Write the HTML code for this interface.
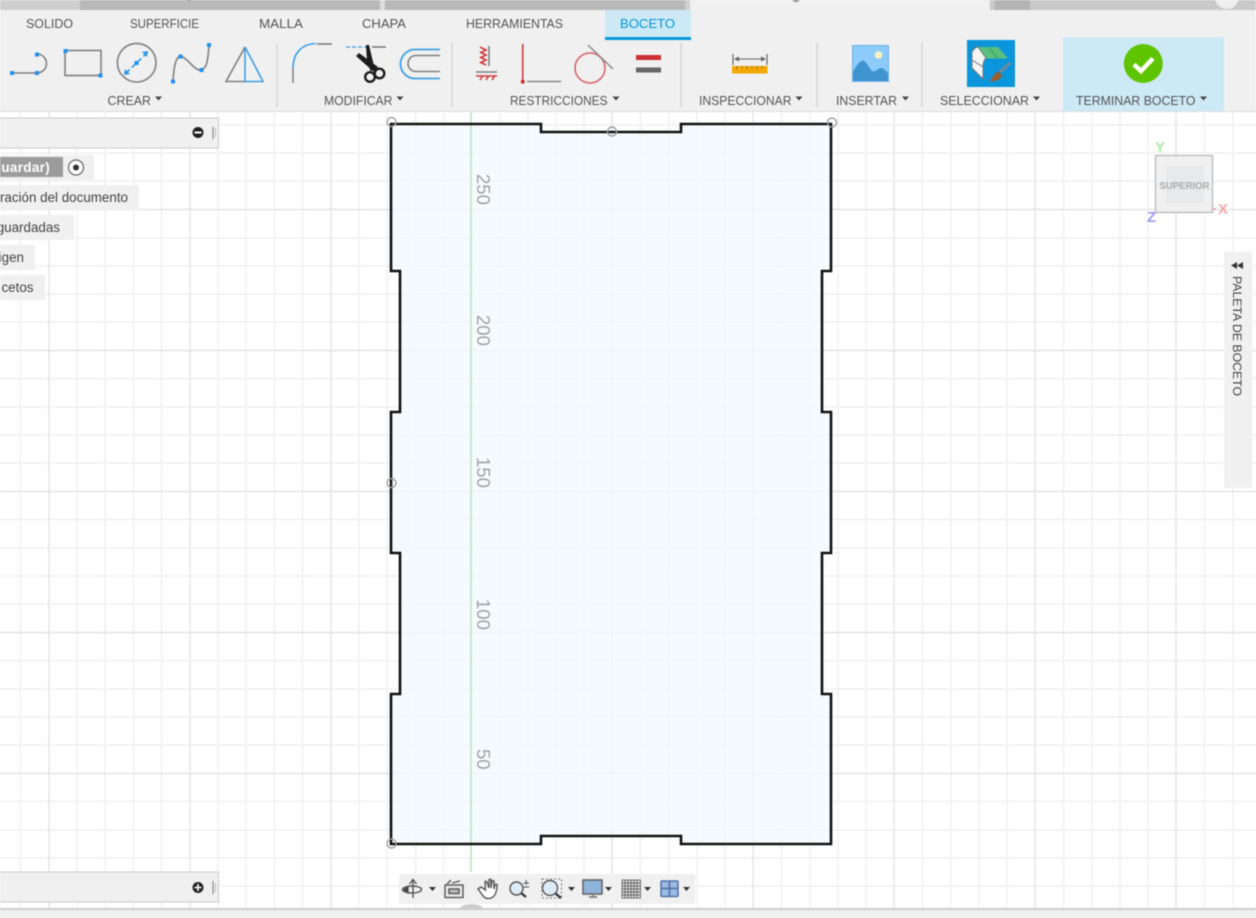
<!DOCTYPE html>
<html lang="es">
<head>
<meta charset="utf-8">
<title>Boceto</title>
<style>
html,body{margin:0;padding:0;background:#fff;}
body{width:1256px;height:918px;overflow:hidden;position:relative;font-family:"Liberation Sans",sans-serif;}
svg{position:absolute;left:0;top:0;filter:blur(.45px);}
text{font-family:"Liberation Sans",sans-serif;}
</style>
</head>
<body>
<svg width="1256" height="918" viewBox="0 0 1256 918" xmlns="http://www.w3.org/2000/svg">
<!-- canvas -->
<rect width="1256" height="918" fill="#fff"/>
<g stroke="#f0f0f0" stroke-width="1.400" fill="none">
<path d="M20.500 112V908M77 112V908M105 112V908M133.500 112V908M161.500 112V908M218 112V908M246 112V908M274.500 112V908M302.500 112V908M359 112V908M387 112V908M415.500 112V908M443.500 112V908M499.500 112V908M528 112V908M556 112V908M584 112V908M640.500 112V908M669 112V908M697 112V908M725 112V908M781.500 112V908M810 112V908M838 112V908M866 112V908M922.500 112V908M951 112V908M979 112V908M1007 112V908M1063.500 112V908M1092 112V908M1120 112V908M1148 112V908M1204.500 112V908M1233 112V908"/>
<path d="M0 125H1256M0 153H1256M0 181H1256M0 238H1256M0 266H1256M0 294H1256M0 322H1256M0 378.500H1256M0 407H1256M0 435H1256M0 463H1256M0 519.500H1256M0 548H1256M0 576H1256M0 604H1256M0 660.500H1256M0 689H1256M0 717H1256M0 745H1256M0 801.500H1256M0 830H1256M0 858H1256M0 886H1256"/>
</g>
<g stroke="#e4e4e4" stroke-width="1.400" fill="none">
<path d="M49 112V908M190 112V908M331 112V908M612 112V908M753 112V908M894 112V908M1035 112V908M1176 112V908"/>
<path d="M0 209.500H1256M0 350.500H1256M0 491.500H1256M0 632.500H1256M0 773.500H1256"/>
</g>
<!-- sketch profile fill -->
<path d="M391 124H541V132H681V124H831V271H822V412H831V553H822V694H831V844H681V836H541V844H391V694H400V553H391V412H400V271H391Z" fill="#f1f9fe" fill-opacity=".82"/>
<path d="M471 112V872" stroke="#b5e6b5" stroke-width="1.500"/>
<path d="M391 124H541V132H681V124H831V271H822V412H831V553H822V694H831V844H681V836H541V844H391V694H400V553H391V412H400V271H391Z" fill="none" stroke="#111" stroke-width="2.600"/>
<!-- constraint handles -->
<g fill="none" stroke="#a0a0a0" stroke-width="1.400">
<circle cx="391.500" cy="122" r="4.500"/><circle cx="612" cy="131.500" r="4.500"/><circle cx="832" cy="122.500" r="4.500"/>
<circle cx="391.500" cy="483" r="4.500"/><circle cx="391.500" cy="843.500" r="4.500"/>
</g>
<!-- ruler numbers -->
<g fill="#a2a2a2" font-size="18.500">
<text transform="translate(477,174) rotate(90)">250</text>
<text transform="translate(477,315) rotate(90)">200</text>
<text transform="translate(477,457) rotate(90)">150</text>
<text transform="translate(477,599) rotate(90)">100</text>
<text transform="translate(477,749) rotate(90)">50</text>
</g>
<!-- browser panel -->
<rect x="-2" y="118" width="220.500" height="30" fill="#f0f0f0" stroke="#ccc"/>
<circle cx="198" cy="132.500" r="5.500" fill="#222"/><rect x="194.500" y="131.500" width="7" height="2" fill="#fff"/>
<path d="M213 127V139" stroke="#777"/><path d="M215.500 128V137" stroke="#bbb"/>
<rect x="0" y="155" width="94" height="25" fill="#f0f0f0"/>
<rect x="0" y="157" width="63" height="20" fill="#9c9c9c"/>
<text x="50" y="172" font-size="13.500" font-weight="bold" letter-spacing=".3" fill="#fff" text-anchor="end">uardar)</text>
<circle cx="76" cy="167.500" r="7.500" fill="#fff" stroke="#666" stroke-width="1.200"/><circle cx="76" cy="167.500" r="3" fill="#333"/>
<rect x="0" y="185" width="139" height="25" fill="#f0f0f0"/>
<text x="128" y="202" font-size="13.400" fill="#444" text-anchor="end">ración del documento</text>
<rect x="0" y="215" width="74" height="25" fill="#f0f0f0"/>
<text x="60" y="232" font-size="13.400" fill="#444" text-anchor="end">guardadas</text>
<rect x="0" y="245" width="35" height="25" fill="#f0f0f0"/>
<text x="24" y="262" font-size="13.400" fill="#444" text-anchor="end">igen</text>
<rect x="0" y="275" width="45" height="25" fill="#f0f0f0"/>
<text x="33.500" y="292" font-size="13.400" fill="#444" text-anchor="end">cetos</text>
<!-- comments panel -->
<rect x="-2" y="872" width="220.500" height="30" fill="#f0f0f0" stroke="#ccc"/>
<circle cx="198" cy="887.500" r="5.500" fill="#222"/><path d="M194.500 887.500H201.500M198 884V891" stroke="#fff" stroke-width="1.600"/>
<path d="M213 881V894" stroke="#777"/><path d="M215.500 883V892" stroke="#bbb"/>
<!-- view cube -->
<rect x="1155.500" y="155.500" width="57" height="57" fill="#f0f0f0" stroke="#b5b5b5" stroke-width="1.200"/>
<rect x="1166" y="166" width="38" height="37" fill="#e8e9ea"/>
<text x="1159.500" y="189" font-size="10.500" font-weight="bold" fill="#a8acb0" textLength="50" lengthAdjust="spacingAndGlyphs">SUPERIOR</text>
<text x="1155" y="152" font-size="15" font-weight="bold" fill="#a8efa8">Y</text>
<text x="1218" y="214" font-size="15" font-weight="bold" fill="#f5a8a8">X</text>
<text x="1147" y="222" font-size="15" font-weight="bold" fill="#9a9af5">Z</text>
<rect x="1213" y="208" width="3" height="2" fill="#f5a8a8"/>
<!-- sketch palette -->
<rect x="1224" y="252" width="28" height="236" fill="#f0f0f0"/>
<path d="M1237 262L1231 265.500L1237 269ZM1243 262L1237 265.500L1243 269Z" fill="#333"/>
<text transform="translate(1233,276) rotate(90)" font-size="11.500" fill="#444" textLength="120" lengthAdjust="spacingAndGlyphs">PALETA DE BOCETO</text>
<!-- navigation bar -->
<rect x="399" y="874" width="296" height="30" fill="#f0f0f0"/>
<g fill="none" stroke="#555" stroke-width="1.400">
<path d="M413 880V898M409.500 884L413 879.500L416.500 884"/><ellipse cx="412" cy="889.500" rx="9.500" ry="3.500"/>
<path d="M403 890L408 887V893Z" fill="#333"/>
<rect x="445" y="885" width="18" height="12.500" fill="#e8e8e8"/><rect x="449" y="889" width="10" height="4.500" fill="#bbb"/><path d="M447 884L451 880M452 883L460 881"/>
<path d="M478 889C481 892 483 898.500 488 898.500C494 898.500 496 894 497 888V884.500L495 884.500L494 889V881H492L491 888V879.500H489V888L486.500 881.500H485L485.500 890L481 887Z" fill="#fff"/>
<circle cx="516.500" cy="888.500" r="6.500" fill="#dcebf5"/><path d="M521 893L526 897" stroke="#333" stroke-width="2.200"/><path d="M523.500 883H529M526.200 880V885M523.500 887H529" stroke-width="1"/>
<rect x="542" y="879" width="19.500" height="19" stroke-dasharray="2 2" stroke-width=".8"/><circle cx="550" cy="888" r="7.500" fill="#dcebf5"/><path d="M555.500 893.500L561 898" stroke="#333" stroke-width="2.200"/>
<rect x="583" y="880" width="19" height="14" fill="#8fb4dc" stroke="#666" stroke-width="1.600"/><path d="M589 897H597M593 894V897" stroke="#888" stroke-width="2"/>
</g>
<g stroke="#666" stroke-width=".9" fill="#ddd"><rect x="622" y="880" width="18.500" height="18"/><path d="M625 880V898M628 880V898M631 880V898M634 880V898M637 880V898M622 883H640M622 886H640M622 889H640M622 892H640M622 895H640" fill="none"/></g>
<g stroke="#4f72a8" stroke-width="1.500" fill="#9cbbe0"><rect x="661" y="881" width="8.500" height="7.500" rx="1"/><rect x="669.500" y="881" width="8.500" height="7.500" rx="1"/><rect x="661" y="888.500" width="8.500" height="8" rx="1"/><rect x="669.500" y="888.500" width="8.500" height="8" rx="1"/></g>
<path d="M429 887H436L432.500 891ZM568 887H575L571.500 891ZM605 887H612L608.500 891ZM644 887H651L647.500 891ZM683 887H690L686.500 891Z" fill="#333"/>
<!-- status bar -->
<path d="M460 908C462 903 480 903 483 908Z" fill="#ccc"/>
<rect x="0" y="908" width="1256" height="2" fill="#ccc"/>
<rect x="0" y="910" width="1256" height="8" fill="#f0f0f0"/>
<!-- ribbon -->
<rect x="0" y="0" width="1256" height="111" fill="#f0f0f0"/>
<rect x="0" y="111" width="1256" height="1" fill="#dedede"/>
<!-- window tabs -->
<rect x="0" y="0" width="80" height="10" fill="#cfcfcf"/>
<rect x="80" y="0" width="300" height="10" fill="#b8b8b8"/>
<rect x="380" y="0" width="5" height="10" fill="#dcdcdc"/>
<rect x="385" y="0" width="300" height="10" fill="#b8b8b8"/>
<rect x="685" y="0" width="5" height="10" fill="#cfcfcf"/>
<rect x="990" y="0" width="266" height="10" fill="#c9c9c9"/>
<rect x="995" y="0" width="35" height="10" fill="#b4b4b4"/>
<circle cx="1227" cy="-3" r="12" fill="#eee"/>
<circle cx="189" cy="-3" r="4" fill="#888"/><circle cx="796" cy="-2" r="4" fill="#888"/>
<!-- tab labels -->
<rect x="605" y="10" width="86" height="30" fill="#cde9f6"/>
<rect x="605" y="37" width="86" height="3" fill="#0696d7"/>
<g font-size="12.500" fill="#555" lengthAdjust="spacingAndGlyphs">
<text x="26" y="28" textLength="47" lengthAdjust="spacingAndGlyphs">SOLIDO</text>
<text x="130" y="28" textLength="69" lengthAdjust="spacingAndGlyphs">SUPERFICIE</text>
<text x="259" y="28" textLength="44" lengthAdjust="spacingAndGlyphs">MALLA</text>
<text x="362" y="28" textLength="44" lengthAdjust="spacingAndGlyphs">CHAPA</text>
<text x="466" y="28" textLength="97" lengthAdjust="spacingAndGlyphs">HERRAMIENTAS</text>
<text x="620" y="28" textLength="55" lengthAdjust="spacingAndGlyphs" fill="#0696d7">BOCETO</text>
</g>
<!-- finish block -->
<rect x="1063" y="37" width="161" height="74" fill="#cde9f6"/>
<!-- separators -->
<g fill="#dcdcdc"><rect x="276" y="43" width="2" height="64"/><rect x="451" y="43" width="2" height="64"/><rect x="680" y="43" width="2" height="64"/><rect x="816" y="43" width="2" height="64"/><rect x="921" y="43" width="2" height="64"/></g>
<!-- group labels -->
<g font-size="12.500" fill="#555">
<text x="107.500" y="105" textLength="43.500" lengthAdjust="spacingAndGlyphs">CREAR</text>
<text x="324" y="105" textLength="68.500" lengthAdjust="spacingAndGlyphs">MODIFICAR</text>
<text x="510" y="105" textLength="97.500" lengthAdjust="spacingAndGlyphs">RESTRICCIONES</text>
<text x="699" y="105" textLength="92.500" lengthAdjust="spacingAndGlyphs">INSPECCIONAR</text>
<text x="836" y="105" textLength="61" lengthAdjust="spacingAndGlyphs">INSERTAR</text>
<text x="940" y="105" textLength="89" lengthAdjust="spacingAndGlyphs">SELECCIONAR</text>
<text x="1076" y="105" textLength="119.500" lengthAdjust="spacingAndGlyphs">TERMINAR BOCETO</text>
</g>
<path d="M155 96.500H162L158.500 100.500ZM396.500 96.500H403.500L400 100.500ZM612.500 96.500H619.500L616 100.500ZM795.500 96.500H802.500L799 100.500ZM902 96.500H909L905.500 100.500ZM1033 96.500H1040L1036.500 100.500ZM1200 96.500H1207L1203.500 100.500Z" fill="#444"/>
<!-- CREAR icons -->
<g fill="none" stroke="#808080" stroke-width="1.600">
<path d="M12 73H37A9.500 9.500 0 0 0 37 54"/>
<rect x="65" y="50.500" width="36" height="25"/>
<circle cx="136.700" cy="62.700" r="19.300"/>
<path d="M173 81C174 65 176 56 181 56.500C187 57 194 71 201 70C208 69 208 55 209 46"/>
<path d="M245 47L226 81.500H245"/>
</g>
<path d="M245 47L263 81.500H245Z" fill="none" stroke="#3fa0e6" stroke-width="1.600"/>
<path d="M126 73L147 53" stroke="#2b96e6" stroke-width="1.600" stroke-dasharray="5 3"/>
<path d="M124 75L130 74L125 69ZM148 51L142 52L147 57Z" fill="#2b96e6"/>
<g fill="#1e90f0">
<rect x="10" y="71" width="4" height="4"/><rect x="35" y="71" width="4" height="4"/><rect x="35" y="52.500" width="4" height="4"/>
<rect x="63.500" y="49" width="4" height="4"/><rect x="98.500" y="73.500" width="4" height="4"/><rect x="134.500" y="61" width="4" height="4"/>
<rect x="171" y="79.500" width="4" height="4"/><rect x="178.500" y="54.500" width="4" height="4"/><rect x="199.500" y="68" width="4" height="4"/><rect x="207" y="43" width="4" height="4"/>
</g>
<!-- MODIFICAR icons -->
<path d="M293 68C293 54 301 44 316 43.500" fill="none" stroke="#3fa0e6" stroke-width="1.600"/>
<path d="M293 68V83M317 44H332" fill="none" stroke="#777" stroke-width="1.400"/>
<path d="M346 47H369" stroke="#3fa0e6" stroke-width="1.300" stroke-dasharray="4 2"/>
<path d="M372 47H386" stroke="#666" stroke-width="1.300"/>
<path d="M366 45H369L374 66L371 72L367 62ZM356 56L359 53L378 67L374 72Z" fill="#1c1c1c"/>
<circle cx="370" cy="77" r="4.800" fill="none" stroke="#1c1c1c" stroke-width="2.400"/>
<circle cx="379.500" cy="73.500" r="4.800" fill="none" stroke="#1c1c1c" stroke-width="2.400"/>
<path d="M440 49.500H415A14.500 14.500 0 0 0 415 78.500H440" fill="none" stroke="#3fa0e6" stroke-width="1.800"/>
<path d="M440 55.500H416A8 8 0 0 0 416 71.500H440" fill="none" stroke="#808080" stroke-width="1.600"/>
<!-- RESTRICCIONES icons -->
<g fill="none" stroke="#cf3a3a" stroke-width="1.600">
<path d="M480 47L486 50L480 53M480 52L486 55L480 58M480 57L486 60L480 63M480 62L486 65"/>
<path d="M476 76H497M480 80L482.500 76M486 80L488.500 76M492 80L494.500 76"/>
<path d="M522.700 44V81"/>
<circle cx="590" cy="68" r="15" stroke="#d9646a"/>
</g>
<path d="M489 46V66M476 72H497" stroke="#808080" stroke-width="1.600"/>
<rect x="521" y="80" width="3.500" height="3.500" fill="#cf2a2a"/>
<path d="M527 81.500H561" stroke="#888" stroke-width="1.400"/>
<path d="M588 45L613 69" stroke="#888" stroke-width="1.400"/>
<rect x="636" y="55" width="25" height="5" fill="#cc3030"/>
<rect x="636" y="67.500" width="25" height="5" fill="#666"/>
<!-- INSPECCIONAR icon -->
<path d="M733 54V65M767 54V65" stroke="#666" stroke-width="1.200"/>
<path d="M735 59H765" stroke="#666" stroke-width="1"/>
<path d="M734 59L739 56.500V61.500ZM766 59L761 56.500V61.500Z" fill="#666"/>
<rect x="732" y="66" width="35.500" height="7.500" fill="#f5a800"/>
<path d="M737 66V69M742 66V68M747 66V69M752 66V68M757 66V69M762 66V68" stroke="#8a6a10" stroke-width="1"/>
<!-- INSERTAR icon -->
<rect x="852.500" y="45.500" width="36" height="36" fill="#8ccbfa" stroke="#6fb2e8"/>
<path d="M853 81V71.500C857 65 860 60.500 863 60.500C867 61 870 71 873.500 71.500C876 71.500 878 68 881.500 68C884 68.500 886 71 888 73V81Z" fill="#3f94cf"/>
<circle cx="878.500" cy="55" r="3.800" fill="#f8f4c0"/>
<!-- SELECCIONAR icon -->
<rect x="967" y="40" width="48" height="47" fill="#0b96db"/>
<path d="M978 47H998L1008 58.500H986Z" fill="#58c07c"/>
<path d="M988 47L998 58.500" stroke="#3f9e64" stroke-width="1"/>
<path d="M972 52C974 48 977 47 978 47L986 58C984 60 983 62 983 66V79L972 68Z" fill="#f4f4f4" stroke="#777" stroke-width="1"/>
<path d="M972 60L983 67" stroke="#777" stroke-width="1"/>
<path d="M1010 63L1000 72" stroke="#888" stroke-width="2.500"/>
<path d="M989 81C992 80 993 74 998 71.500L1002 75C1001 80 996 82 989 81Z" fill="#9a6034"/>
<!-- TERMINAR icon -->
<circle cx="1143.300" cy="63.500" r="19.500" fill="#5fc400"/>
<path d="M1134 64.500L1141 71L1153 58.500" fill="none" stroke="#fff" stroke-width="4.500"/>
</svg>
</body>
</html>
